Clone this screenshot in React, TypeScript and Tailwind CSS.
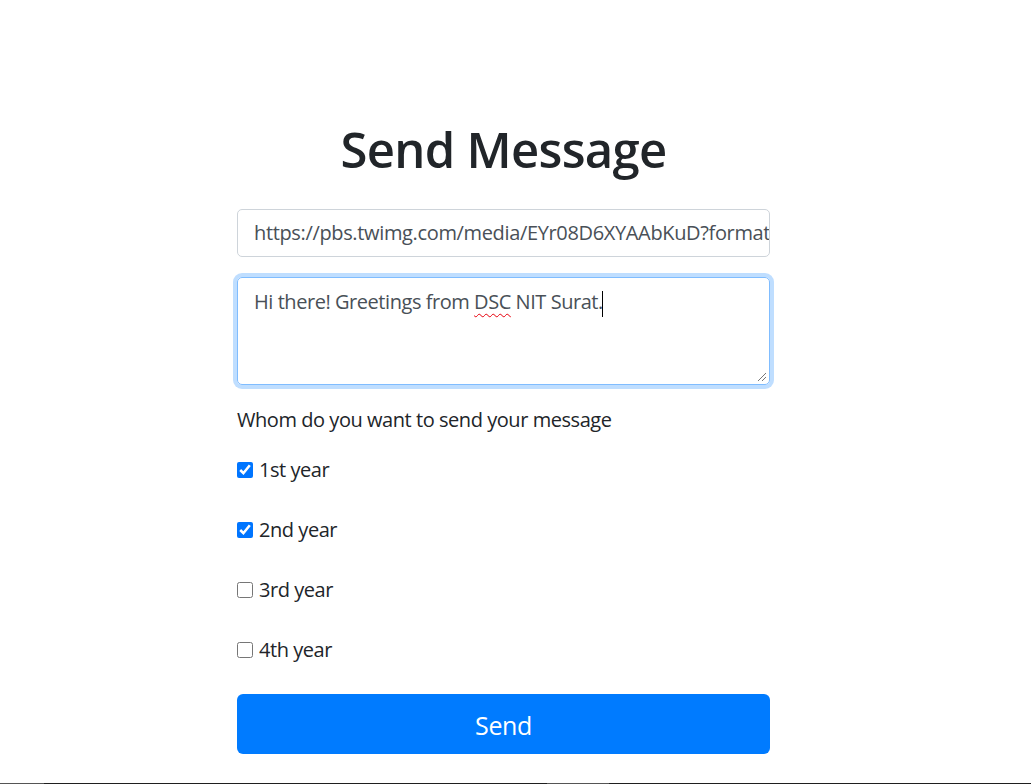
export default function App() {
  const years = [
    { label: "1st year", checked: true },
    { label: "2nd year", checked: true },
    { label: "3rd year", checked: false },
    { label: "4th year", checked: false },
  ];

  return (
    <div className="min-h-[784px] flex flex-col bg-white font-['Open_Sans',sans-serif] text-[#212529]">
      <div className="flex-1 pt-[117px]">
        <div className="ml-[237px] w-[533px] flex flex-col">
          <h1 className="text-center text-[49px] leading-[65px] font-semibold tracking-[-0.7px]">Send Message</h1>

          <div className="mt-[27px] h-[48px] border border-[#ced4da] rounded-[5px] px-[16px] flex items-center text-[20px] tracking-[-0.35px] text-[#495057] whitespace-nowrap overflow-hidden">
            https://pbs.twimg.com/media/EYr08D6XYAAbKuD?format=jpg&amp;name=large
          </div>

          <div className="relative mt-[20px] h-[108px] border border-[#80bdff] rounded-[5px] shadow-[0_0_0_4px_rgba(0,123,255,0.25)] px-[16px] pt-[9px] text-[20px] leading-[30px] tracking-[-0.45px] text-[#495057]">
            Hi there! Greetings from{" "}
            <span className="underline decoration-wavy decoration-red-600 decoration-1 underline-offset-4">DSC</span> NIT Surat.
            <span className="inline-block w-px h-[26px] bg-black align-middle -ml-px"></span>
            <svg className="absolute right-[2px] bottom-[2px]" width="10" height="10" viewBox="0 0 10 10">
              <path d="M9 1 L1 9 M9 5 L5 9" stroke="#777" strokeWidth="1" />
            </svg>
          </div>

          <p className="mt-[20px] text-[20px] leading-[30px] tracking-[-0.45px]">Whom do you want to send your message</p>

          <div className="mt-[20px] flex flex-col gap-[30px]">
            {years.map((y) => (
              <label key={y.label} className="flex items-center gap-[6px] text-[20px] leading-[30px] tracking-[-0.45px]">
                <input type="checkbox" defaultChecked={y.checked} className="w-4 h-4 m-0" />
                {y.label}
              </label>
            ))}
          </div>

          <button className="mt-[29px] h-[60px] pt-[3px] rounded-[6px] bg-[#007bff] text-white text-[25px] tracking-[-0.4px]">Send</button>
        </div>
      </div>
      <div className="h-px bg-[#1f1f1f] flex">
        <div className="w-[44px] bg-[#555]"></div>
        <div className="ml-[503px] w-[62px] bg-[#555]"></div>
      </div>
    </div>
  );
}
